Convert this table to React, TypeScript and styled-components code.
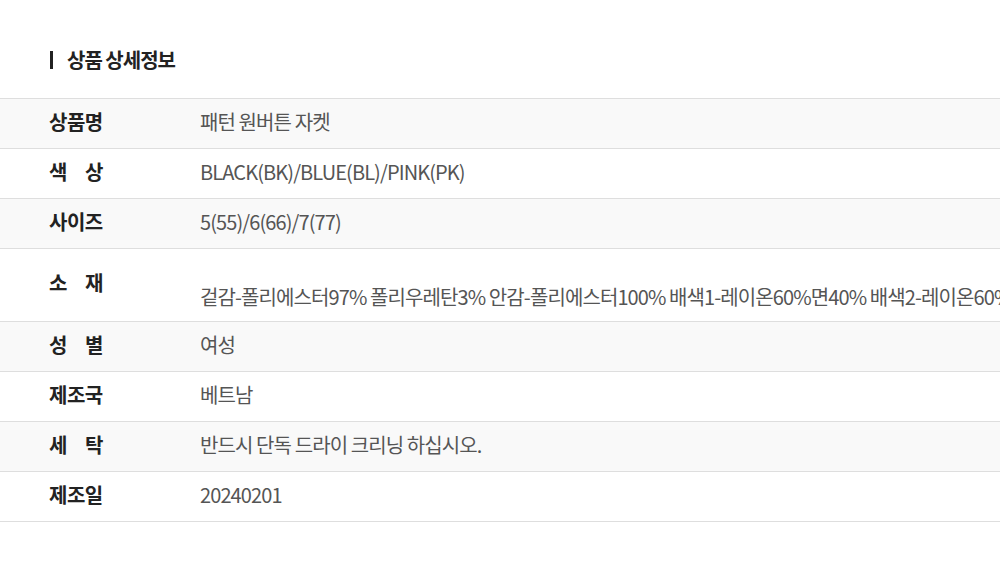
import React from "react";
import styled, { createGlobalStyle } from "styled-components";

const Global = createGlobalStyle`
  html, body { margin: 0; padding: 0; background: #fff; }
  body { font-family: "Noto Sans CJK KR", "Noto Sans", sans-serif; overflow: hidden; }
`;

const Page = styled.div`
  width: 1000px;
  overflow: hidden;
`;

const Header = styled.div`
  display: flex;
  align-items: flex-start;
  gap: 14px;
  padding: 50px 0 0 50px;
  height: 48px;
  box-sizing: border-box;
`;

const Bar = styled.span`
  width: 3px;
  height: 18px;
  margin-top: 1px;
  background: #222;
`;

const Title = styled.h2`
  margin: 0;
  font-size: 20px;
  line-height: 20px;
  font-weight: 700;
  color: #222;
  letter-spacing: -1px;
`;

const Table = styled.div`
  margin-top: 48px;
  border-bottom: 1px solid #dedede;
`;

const Row = styled.div<{ $shade: boolean; $tall?: boolean }>`
  display: grid;
  grid-template-columns: 200px 1fr;
  align-items: center;
  height: ${(p) => (p.$tall ? 73 : 50)}px;
  padding-bottom: 4px;
  box-sizing: border-box;
  border-top: 1px solid #dedede;
  background: ${(p) => (p.$shade ? "#f9f9f9" : "#fff")};
`;

const Label = styled.div`
  padding-left: 49px;
  font-size: 20px;
  font-weight: 700;
  color: #222;
  line-height: 24px;
  letter-spacing: -0.5px;
  white-space: nowrap;
`;

const LabelText = styled.span`
  display: inline-block;
  width: 54px;
  text-align: justify;
  text-align-last: justify;
  white-space: nowrap;
`;

const Value = styled.div<{ $offset?: number }>`
  font-size: 20px;
  color: #555;
  line-height: 24px;
  white-space: nowrap;
  letter-spacing: -0.9px;
  padding-top: ${(p) => p.$offset ?? 0}px;
`;

const rows: { label: string; value: string; tall?: boolean }[] = [
  { label: "상품명", value: "패턴 원버튼 자켓" },
  { label: "색 상", value: "BLACK(BK)/BLUE(BL)/PINK(PK)" },
  { label: "사이즈", value: "5(55)/6(66)/7(77)" },
  {
    label: "소 재",
    value:
      "겉감-폴리에스터97% 폴리우레탄3% 안감-폴리에스터100% 배색1-레이온60%면40% 배색2-레이온60%면40%",
    tall: true,
  },
  { label: "성 별", value: "여성" },
  { label: "제조국", value: "베트남" },
  { label: "세 탁", value: "반드시 단독 드라이 크리닝 하십시오." },
  { label: "제조일", value: "20240201" },
];

export default function App() {
  return (
    <Page>
      <Global />
      <Header>
        <Bar />
        <Title>상품 상세정보</Title>
      </Header>
      <Table>
        {rows.map((r, i) => (
          <Row key={r.label} $shade={i % 2 === 0} $tall={r.tall}>
            <Label>
              <LabelText>{r.label}</LabelText>
            </Label>
            <Value $offset={r.tall ? 28 : 0}>{r.value}</Value>
          </Row>
        ))}
      </Table>
    </Page>
  );
}
